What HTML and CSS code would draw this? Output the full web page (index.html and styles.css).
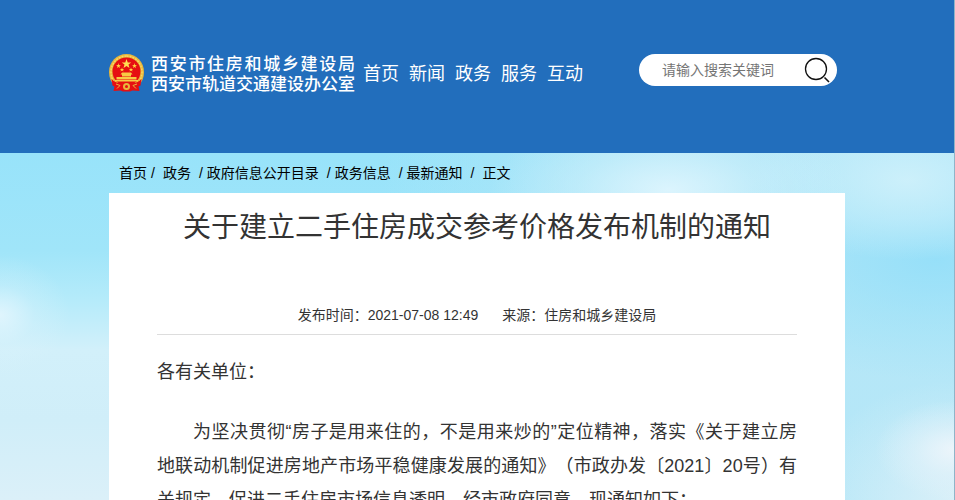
FILE: index.html
```html
<!DOCTYPE html>
<html lang="zh-CN">
<head>
    <meta charset="UTF-8">
    <meta name="viewport" content="width=device-width, initial-scale=1.0">
    <title>关于建立二手住房成交参考价格发布机制的通知</title>
    <link rel="stylesheet" href="styles.css">
</head>
<body>

    <header class="header">
        <div class="container header-inner">
            <a class="logo" href="#">
                <svg class="emblem" viewBox="0 0 70 76" aria-hidden="true">
                    <path d="M35 0C15 0 0 16 0 36c0 11 4 20 10 26h50c6-6 10-15 10-26C70 16 55 0 35 0z" fill="#e9b53a"/>
                    <path d="M35 4C18 4 4 18 4 36c0 9 3 16 7 22" fill="none" stroke="#f8d964" stroke-width="3" stroke-dasharray="4 2"/>
                    <path d="M35 4c17 0 31 14 31 32 0 9-3 16-7 22" fill="none" stroke="#f8d964" stroke-width="3" stroke-dasharray="4 2"/>
                    <circle cx="35" cy="35" r="28" fill="#e60f12"/>
                    <path d="M5 50c8 8 14 9 22 7l8 3 8-3c8 2 14 1 22-7l-2 13-4 2 2 9-14-1-5 2H28l-5-2-14 1 2-9-4-2z" fill="#e60f12"/>
                    <path d="M35 10l2.500 7h7l-5.500 4 2 7-6-4-6 4 2-7-5.500-4h7z" fill="#ffe052"/>
                    <path d="M19 18l1 4h4l-3 2 1 4-3-2-3 2 1-4-3-2h4zM51 18l1 4h4l-3 2 1 4-3-2-3 2 1-4-3-2h4zM26 27l1 3h3l-2 2 1 3-3-2-3 2 1-3-2-2h3zM44 27l1 3h3l-2 2 1 3-3-2-3 2 1-3-2-2h3z" fill="#ffd33f"/>
                    <path d="M26 37h18l3 4H23zM26 41h18v4H26zM15 46h40v5H15zM12 52h46v3H12z" fill="#f7cb45"/>
                    <circle cx="35" cy="65" r="7" fill="#e8b63c"/>
                    <circle cx="35" cy="65" r="3" fill="#e60f12"/>
                    <path d="M14 60l8 3-6 6M56 60l-8 3 6 6" fill="none" stroke="#e8b63c" stroke-width="2"/>
                </svg>
                <span class="logo-text">
                    <span class="logo-line">西安市住房和城乡建设局</span>
                    <span class="logo-line">西安市轨道交通建设办公室</span>
                </span>
            </a>
            <nav class="nav">
                <a href="#">首页</a>
                <a href="#">新闻</a>
                <a href="#">政务</a>
                <a href="#">服务</a>
                <a href="#">互动</a>
            </nav>
            <form class="search">
                <input class="search-input" type="text" placeholder="请输入搜索关键词" aria-label="请输入搜索关键词">
                <button class="search-btn" type="button" aria-label="搜索">
                    <svg viewBox="0 0 26 26" fill="none" stroke="#111">
                        <circle cx="12" cy="12" r="10.5" stroke-width="1.3"/>
                        <path d="M20.5 20.5l4.5 4.500" stroke-width="1.6"/>
                    </svg>
                </button>
            </form>
        </div>
    </header>

    <main class="container">
        <nav class="breadcrumb">
            <a href="#">首页</a><span class="sep first">/</span><a href="#">政务</a><span class="sep">/</span><a href="#">政府信息公开目录</a><span class="sep">/</span><a href="#">政务信息</a><span class="sep">/</span><a href="#">最新通知</a><span class="sep last">/</span><span>正文</span>
        </nav>

        <article class="article">
            <h1>关于建立二手住房成交参考价格发布机制的通知</h1>
            <div class="meta">
                <span>发布时间：2021-07-08 12:49</span>
                <span>来源：住房和城乡建设局</span>
            </div>
            <div class="content">
                <p class="salutation">各有关单位：</p>
                <p>为坚决贯彻“房子是用来住的，不是用来炒的”定位精神，落实《关于建立房地联动机制促进房地产市场平稳健康发展的通知》（市政办发〔2021〕20号）有关规定，促进二手住房市场信息透明，经市政府同意，现通知如下：</p>
            </div>
        </article>
    </main>

</body>
</html>
```
FILE: styles.css
```css
* {
    box-sizing: border-box;
}

body {
    margin: 0;
    min-height: 100vh;
    border-right: 1px solid #8fb4c8;
    font-family: "Liberation Sans", "Noto Sans CJK SC", sans-serif;
    font-size: 14px;
    color: #333;
    /* sky with soft clouds */
    background-color: #b9e9f8;
    background-image:
        radial-gradient(ellipse 70px 60px at 0 315px, rgba(232, 247, 254, 0.8), rgba(220, 243, 252, 0.3) 50%, transparent),
        radial-gradient(ellipse 80px 50px at 100% 450px, rgba(240, 246, 251, 0.9), rgba(230, 243, 250, 0.5) 50%, transparent),
        radial-gradient(ellipse 150px 120px at 100% 500px, rgba(226, 242, 249, 0.8), transparent),
        radial-gradient(ellipse 180px 80px at 70% 190px, rgba(224, 246, 254, 0.9), rgba(210, 242, 252, 0.5) 50%, transparent),
        radial-gradient(ellipse 160px 80px at 95% 180px, rgba(208, 241, 251, 0.9), rgba(200, 239, 251, 0.6) 50%, transparent),
        radial-gradient(ellipse 240px 120px at 98% 260px, rgba(148, 223, 249, 0.9), rgba(155, 225, 248, 0.5) 50%, transparent),
        linear-gradient(to right, transparent 40%, rgba(178, 230, 247, 0.9) 70%),
        linear-gradient(#98e3fa 153px, #a0e5f9 250px, #b5ebfa 300px, #d2f0fa 350px, #d0eef9 420px, #dbf0f9 500px);
    background-repeat: no-repeat;
}

a {
    color: inherit;
    text-decoration: none;
}

.container {
    max-width: 736px;
    margin: 0 auto;
}

/* header */
.header {
    min-height: 153px;
    padding-top: 54px;
    background-color: #226ebc;
    color: #fff;
}

.header-inner {
    display: flex;
    align-items: flex-start;
    padding-right: 8px;
}

.logo {
    display: flex;
    gap: 7px;
}

.emblem {
    width: 35px;
    height: 38px;
}

.logo-text {
    width: 204px;
    padding-top: 1px;
    font-size: 17px;
    font-weight: 500;
    line-height: 20px;
}

.logo-line {
    display: block;
    white-space: nowrap;
    text-align: justify;
    text-align-last: justify;
}

.nav {
    display: flex;
    gap: 10px;
    margin-left: 8px;
    font-size: 18px;
    line-height: 40px;
}

.search {
    display: flex;
    align-items: center;
    width: 198px;
    height: 32px;
    margin-left: auto;
    padding: 0 7px 0 23px;
    background-color: #fff;
    border-radius: 16px;
}

.search-input {
    flex: 1;
    min-width: 0;
    padding: 0;
    border: 0;
    outline: 0;
    background: none;
    font-family: inherit;
    font-size: 14px;
}

.search-input::placeholder {
    color: #757575;
}

.search-btn {
    width: 26px;
    height: 26px;
    padding: 0;
    border: 0;
    background: none;
    cursor: pointer;
}

.search-btn svg {
    display: block;
}

/* breadcrumb */
.breadcrumb {
    padding: 0 10px;
    line-height: 40px;
    color: #000;
}

.sep {
    margin: 0 4px 0 8px;
}

.sep.first {
    margin: 0 8px 0 4px;
}

.sep.last {
    margin: 0 8px;
}

/* article */
.article {
    padding: 14px 48px 40px;
    background-color: #fff;
}

.article h1 {
    margin: 0;
    font-size: 28px;
    font-weight: 400;
    line-height: 42px;
    text-align: center;
}

.meta {
    display: flex;
    justify-content: center;
    gap: 24px;
    margin-top: 48px;
    border-bottom: 1px solid #ddd;
    line-height: 37px;
}

.content {
    padding-top: 20px;
    font-size: 18px;
    line-height: 34px;
    text-align: justify;
    text-spacing-trim: space-all;
}

.content p {
    margin: 0;
    text-indent: 2em;
}

.content .salutation {
    margin-bottom: 26px;
    text-indent: 0;
}
```
